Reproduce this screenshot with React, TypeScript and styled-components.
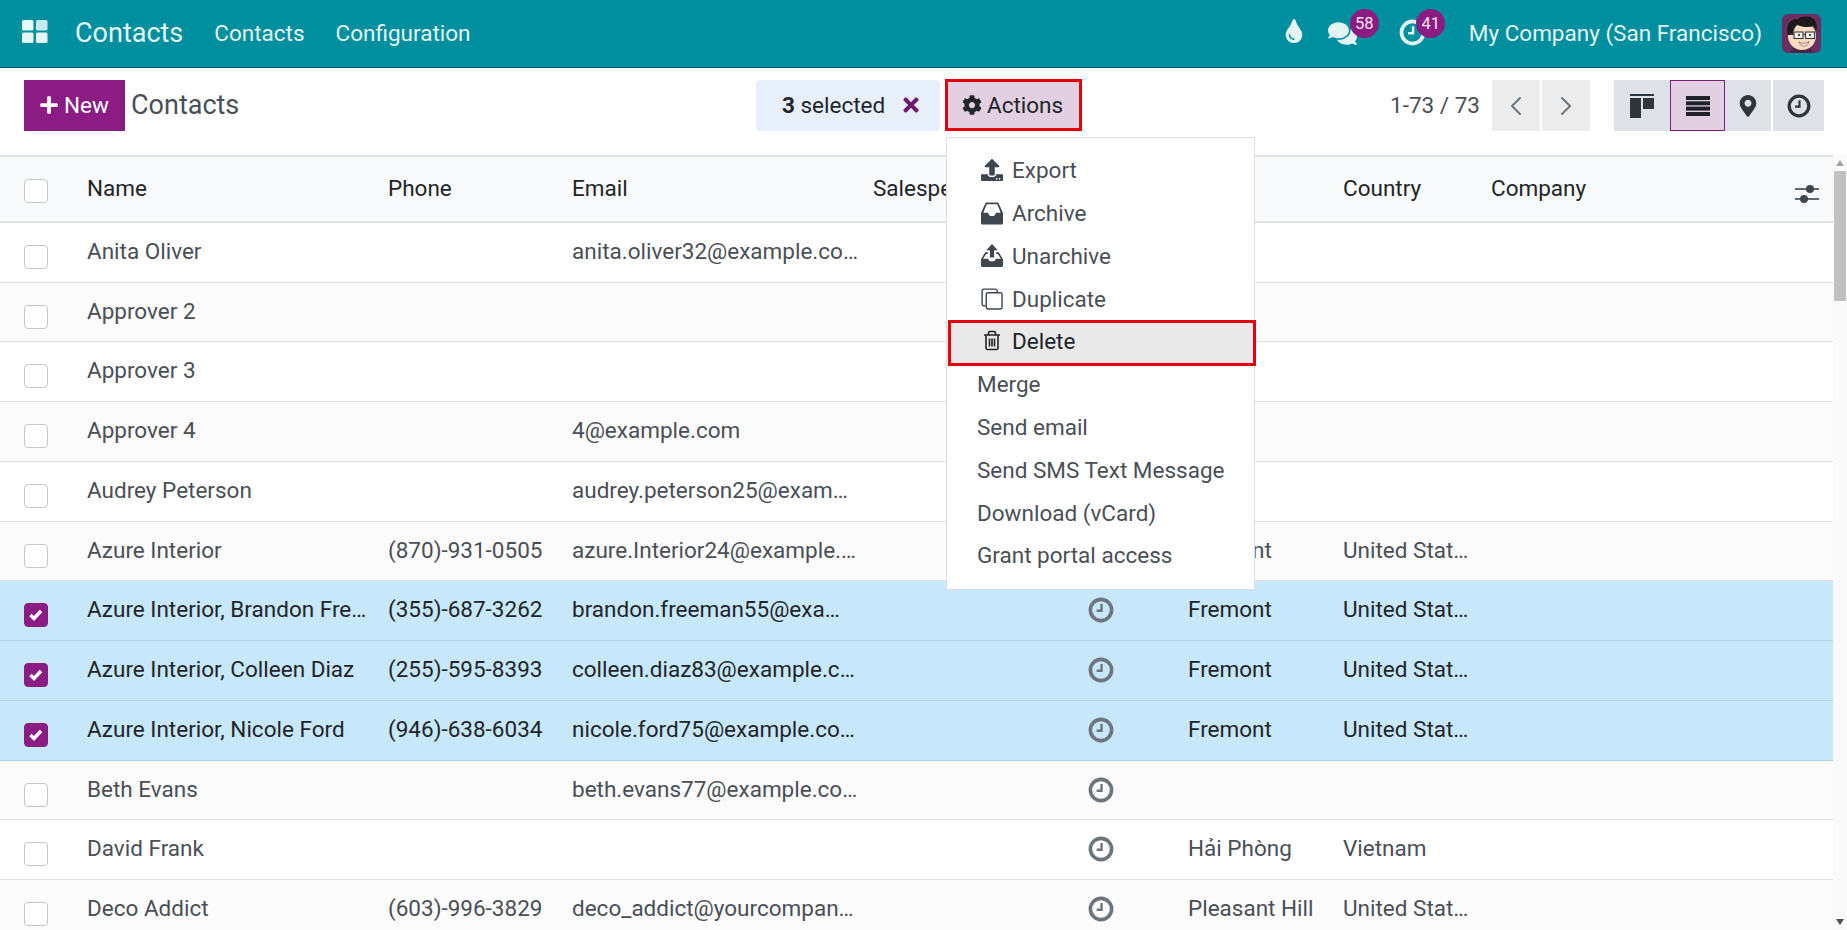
import styled, { createGlobalStyle } from 'styled-components'
import { FaComments, FaCog, FaPlus, FaTimes, FaTint, FaUpload, FaMapMarkerAlt } from 'react-icons/fa'
import { ChevronLeft, ChevronRight } from 'lucide-react'

const COLUMNS = '71px 301px 184px 301px 173px 142px 155px 148px 1fr 43px'

type Contact = {
    name: string
    phone?: string
    email?: string
    activity?: boolean
    city?: string
    country?: string
    selected?: boolean
    height: number
}

const contacts: Contact[] = [
    { name: 'Anita Oliver', email: 'anita.oliver32@example.co…', height: 60 },
    { name: 'Approver 2', height: 59 },
    { name: 'Approver 3', height: 60 },
    { name: 'Approver 4', email: '4@example.com', height: 60 },
    { name: 'Audrey Peterson', email: 'audrey.peterson25@exam…', height: 60 },
    { name: 'Azure Interior', phone: '(870)-931-0505', email: 'azure.Interior24@example.…', city: 'Fremont', country: 'United Stat…', height: 59 },
    { name: 'Azure Interior, Brandon Fre…', phone: '(355)-687-3262', email: 'brandon.freeman55@exa…', activity: true, city: 'Fremont', country: 'United Stat…', selected: true, height: 60 },
    { name: 'Azure Interior, Colleen Diaz', phone: '(255)-595-8393', email: 'colleen.diaz83@example.c…', activity: true, city: 'Fremont', country: 'United Stat…', selected: true, height: 60 },
    { name: 'Azure Interior, Nicole Ford', phone: '(946)-638-6034', email: 'nicole.ford75@example.co…', activity: true, city: 'Fremont', country: 'United Stat…', selected: true, height: 60 },
    { name: 'Beth Evans', email: 'beth.evans77@example.co…', activity: true, height: 59 },
    { name: 'David Frank', activity: true, city: 'Hải Phòng', country: 'Vietnam', height: 60 },
    { name: 'Deco Addict', phone: '(603)-996-3829', email: 'deco_addict@yourcompan…', activity: true, city: 'Pleasant Hill', country: 'United Stat…', height: 60 },
]

function ClockIcon({ size = 26 }: { size?: number }) {
    return (
        <svg width={size} height={size} viewBox="0 0 24 24" fill="none" stroke="currentColor">
            <circle cx="12" cy="12" r="9.800" strokeWidth="3.300" />
            <path d="M12.500 6.500v6.200H8" strokeWidth="2.200" />
        </svg>
    )
}

function ArchiveIcon() {
    return (
        <svg width="23" height="23" viewBox="1 1 21 21" fill="#3f4650">
            <path d="M5.500 1h12l4.500 10v9.500a1.500 1.500 0 0 1-1.500 1.500h-18A1.500 1.500 0 0 1 1 20.500V11L5.500 1zm1 1.600L3.200 10.800h4.300l2 3h4l2-3h4.300L16.500 2.600z" />
        </svg>
    )
}

function UnarchiveIcon() {
    return (
        <svg width="23" height="23" viewBox="1 0 21 22" fill="#3f4650">
            <path d="M11.500 0l5.500 6h-3.500v7h-4V6H6z" />
            <path d="M5 8h2.500v1.500H6L3 14h4.500l2 2.500h4l2-2.500H20l-3-4.500h-1.500V8H18l4 6.500v6a1.500 1.500 0 0 1-1.500 1.500h-18A1.500 1.500 0 0 1 1 20.500v-6z" />
        </svg>
    )
}

function DuplicateIcon() {
    return (
        <svg width="24" height="24" viewBox="0 0 23 23" fill="none" stroke="#3f4650" strokeWidth="1.500">
            <path d="M4.500 18.500H3a1.800 1.800 0 0 1-1.800-1.800V3A1.800 1.800 0 0 1 3 1.200h12.500A1.800 1.800 0 0 1 17 3v1.500" />
            <rect x="5.500" y="5" width="16.500" height="17" rx="1.800" />
        </svg>
    )
}

function TrashIcon() {
    return (
        <svg width="18" height="21" viewBox="0 0 18 20" fill="none" stroke="#212529" strokeWidth="1.600">
            <path d="M1 4.500h16M5.500 4.500V2.200C5.500 1.500 6 1 6.700 1h4.600c.7 0 1.200.5 1.200 1.200v2.300" />
            <path d="M3 4.500v13c0 .9.600 1.500 1.500 1.500h9c.9 0 1.500-.6 1.500-1.500v-13" />
            <path d="M6.500 8v8M9 8v8M11.500 8v8" />
        </svg>
    )
}

function SlidersIcon() {
    return (
        <svg width="24" height="20" viewBox="0 0 24 20" fill="#3f4650">
            <rect x="0" y="4.200" width="24" height="1.600" />
            <circle cx="15" cy="5" r="4" />
            <rect x="0" y="14.200" width="24" height="1.600" />
            <circle cx="9" cy="15" r="4" />
        </svg>
    )
}

function KanbanIcon() {
    return (
        <svg width="24" height="24" viewBox="0 0 24 24" fill="#2f353d">
            <rect x="0" y="0" width="24" height="2" />
            <rect x="0" y="4" width="11" height="20" />
            <rect x="13" y="4" width="11" height="11" />
        </svg>
    )
}

function ListIcon() {
    return (
        <svg width="24" height="20" viewBox="0 0 24 20" fill="#1f2329">
            <rect y="0" width="24" height="4" />
            <rect y="5.300" width="24" height="4" />
            <rect y="10.600" width="24" height="4" />
            <rect y="16" width="24" height="4" />
        </svg>
    )
}

function GridLogo() {
    return (
        <svg width="26" height="23" viewBox="0 0 26 23" fill="#e6f5f6">
            <rect x="0" y="0" width="11.500" height="10.500" rx="1.500" />
            <rect x="14" y="0" width="11.500" height="10.500" rx="1.500" fill="#c6e9ec" />
            <rect x="0" y="12.500" width="11.500" height="10.500" rx="1.500" />
            <rect x="14" y="12.500" width="11.500" height="10.500" rx="1.500" />
        </svg>
    )
}

function Avatar() {
    return (
        <svg width="39" height="39" viewBox="0 0 39 39">
            <rect width="39" height="39" rx="6" fill="#6a2f60" />
            <path d="M8 39c1-5 5-7 11-7s10 2 12 7z" fill="#4a2448" />
            <ellipse cx="20" cy="22" rx="14" ry="14" fill="#f7dcc2" />
            <path d="M6 21C3 11 9 4 16 5c3-3 11-3 14-1 4 2 6 7 4 14l-2-6c-6 2-12 1-17-1-2 2-4 5-4 10z" fill="#1d1a1e" />
            <g fill="none" stroke="#3a3a3a" strokeWidth="1.100">
                <rect x="12" y="18" width="9" height="6.500" fill="#eef2f0" />
                <rect x="23.500" y="18" width="9" height="6.500" fill="#eef2f0" />
                <path d="M21 20.500h2.500M12 20H7" />
            </g>
            <circle cx="17" cy="21" r="1.100" fill="#222" />
            <circle cx="28" cy="21" r="1.100" fill="#222" />
            <path d="M17 28c3 2 7 1.800 10-.500-1 3.500-3 4.500-5 4.500s-4-1.500-5-4z" fill="#fff" stroke="#7a3b2e" strokeWidth=".7" />
        </svg>
    )
}

const menuItems = [
    { label: 'Export', icon: <FaUpload size={22} color="#3f4650" /> },
    { label: 'Archive', icon: <ArchiveIcon /> },
    { label: 'Unarchive', icon: <UnarchiveIcon /> },
    { label: 'Duplicate', icon: <DuplicateIcon /> },
]

const plainItems = ['Merge', 'Send email', 'Send SMS Text Message', 'Download (vCard)', 'Grant portal access']

export default function App() {
    return (
        <>
            <GlobalStyle />
            <Page>
                <NavBar>
                    <LogoSlot>
                        <GridLogo />
                    </LogoSlot>
                    <Brand>Contacts</Brand>
                    <NavLink>Contacts</NavLink>
                    <NavLink>Configuration</NavLink>
                    <NavRight>
                        <NavIcon $right={14.5} $top={-4}>
                            <FaTint size={24} />
                        </NavIcon>
                        <NavIcon $right={36} $top={2}>
                            <FaComments size={29} />
                            <Badge $left={24}>58</Badge>
                        </NavIcon>
                        <NavIcon $right={39} $top={0}>
                            <ClockIcon size={27} />
                            <Badge $left={20.5}>41</Badge>
                        </NavIcon>
                        <CompanyName>My Company (San Francisco)</CompanyName>
                        <AvatarSlot>
                            <Avatar />
                        </AvatarSlot>
                    </NavRight>
                </NavBar>

                <ControlPanel>
                    <LeftGroup>
                        <NewButton>
                            <FaPlus size={20} />
                            New
                        </NewButton>
                        <Title>Contacts</Title>
                    </LeftGroup>
                    <SelectedChip>
                        <span>
                            <b>3</b> selected
                        </span>
                        <FaTimes size={22} color="#6f1a70" />
                    </SelectedChip>
                    <ActionsWrap>
                        <ActionsButton>
                            <FaCog size={20} />
                            Actions
                        </ActionsButton>
                        <Dropdown>
                            {menuItems.map((item) => (
                                <MenuItem key={item.label}>
                                    <MenuIcon>{item.icon}</MenuIcon>
                                    {item.label}
                                </MenuItem>
                            ))}
                            <DeleteItem>
                                <DeleteIcon>
                                    <TrashIcon />
                                </DeleteIcon>
                                Delete
                            </DeleteItem>
                            {plainItems.map((label) => (
                                <PlainItem key={label}>{label}</PlainItem>
                            ))}
                        </Dropdown>
                    </ActionsWrap>
                    <RightGroup>
                        <PagerText>1-73 / 73</PagerText>
                        <PagerButton>
                            <ChevronLeft size={32} strokeWidth={1.5} />
                        </PagerButton>
                        <PagerButton>
                            <ChevronRight size={32} strokeWidth={1.5} />
                        </PagerButton>
                        <ViewGroup>
                            <ViewButton $width={56}>
                                <KanbanIcon />
                            </ViewButton>
                            <ViewButton $width={55} $active>
                                <ListIcon />
                            </ViewButton>
                            <ViewButton $width={46}>
                                <FaMapMarkerAlt size={22} color="#2f353d" />
                            </ViewButton>
                            <ViewButton $width={51} $gap>
                                <ClockIcon size={24} />
                            </ViewButton>
                        </ViewGroup>
                    </RightGroup>
                </ControlPanel>

                <ListArea>
                    <Table>
                        <HeaderRow>
                            <CheckCell>
                                <CheckBox />
                            </CheckCell>
                            <HeaderCell>Name</HeaderCell>
                            <HeaderCell>Phone</HeaderCell>
                            <HeaderCell>Email</HeaderCell>
                            <HeaderCell>Salesperson</HeaderCell>
                            <HeaderCell>Activities</HeaderCell>
                            <HeaderCell>City</HeaderCell>
                            <HeaderCell>Country</HeaderCell>
                            <HeaderCell>Company</HeaderCell>
                            <SettingsCell>
                                <SlidersIcon />
                            </SettingsCell>
                        </HeaderRow>
                        {contacts.map((contact, index) => (
                            <Row key={contact.name} $selected={contact.selected} $odd={index % 2 === 1} $height={contact.height}>
                                <CheckCell>
                                    <CheckBox $checked={contact.selected}>
                                        {contact.selected && (
                                            <svg width="14" height="12" viewBox="0 0 14 12" fill="none" stroke="#fff" strokeWidth="3.400">
                                                <path d="M1.500 6l3.500 3.500 7-7.500" />
                                            </svg>
                                        )}
                                    </CheckBox>
                                </CheckCell>
                                <Cell>{contact.name}</Cell>
                                <Cell>{contact.phone}</Cell>
                                <Cell>{contact.email}</Cell>
                                <Cell />
                                <ActivityCell>{contact.activity && <ClockIcon />}</ActivityCell>
                                <Cell>{contact.city}</Cell>
                                <Cell>{contact.country}</Cell>
                            </Row>
                        ))}
                    </Table>
                    <ScrollBar>
                        <ScrollArrow>
                            <svg width="8" height="6" viewBox="0 0 8 6" fill="#a3a3a3">
                                <path d="M4 0l4 6H0z" />
                            </svg>
                        </ScrollArrow>
                        <ScrollThumb />
                        <ScrollArrow $bottom>
                            <svg width="8" height="6" viewBox="0 0 8 6" fill="#505050">
                                <path d="M0 0h8L4 6z" />
                            </svg>
                        </ScrollArrow>
                    </ScrollBar>
                </ListArea>
            </Page>
        </>
    )
}

const GlobalStyle = createGlobalStyle`
    html, body {
        margin: 0;
        height: 100%;
        overflow: hidden;
        background: #fff;
    }
    * {
        box-sizing: border-box;
    }
    body {
        font-family: Roboto, 'Noto Sans', sans-serif;
        font-size: 22.5px;
        color: #4a4f57;
    }
`
const Page = styled.div`
    display: flex;
    flex-direction: column;
    width: 1847px;
    height: 930px;
    overflow: hidden;
`
const NavBar = styled.header`
    display: flex;
    align-items: center;
    flex: 0 0 68px;
    padding-bottom: 2px;
    background: #008f9e;
    border-bottom: 1px solid #075a66;
    color: #e4f4f5;
`
const LogoSlot = styled.div`
    display: flex;
    margin: -2px 0 0 22px;
`
const Brand = styled.div`
    margin: 1px 0 0 27px;
    font-size: 27px;
`
const NavLink = styled.div`
    margin-left: 31px;
`
const NavRight = styled.div`
    display: flex;
    align-items: center;
    margin-left: auto;
`
const NavIcon = styled.div<{ $right: number; $top: number }>`
    position: relative;
    display: flex;
    justify-content: center;
    width: 34px;
    margin-top: ${(p) => p.$top}px;
    margin-right: ${(p) => p.$right}px;
    color: #e4f4f5;
`
const Badge = styled.span<{ $left: number }>`
    position: absolute;
    top: -10px;
    left: ${(p) => p.$left}px;
    display: flex;
    align-items: center;
    justify-content: center;
    width: 29px;
    height: 29px;
    border-radius: 50%;
    background: #8a1c83;
    color: #f2e6f1;
    font-size: 16.5px;
`
const CompanyName = styled.div``
const AvatarSlot = styled.div`
    display: flex;
    margin: 2px 26px 0 20px;
`
const ControlPanel = styled.div`
    display: flex;
    align-items: flex-start;
    flex: 0 0 87px;
    padding: 12px 23px 0 24px;
`
const LeftGroup = styled.div`
    display: flex;
    align-items: center;
    width: 732px;
`
const NewButton = styled.button`
    display: flex;
    align-items: center;
    gap: 5px;
    width: 101px;
    height: 51px;
    padding: 0 0 2px 15px;
    border: none;
    background: #8a1c83;
    color: #fff;
    font: inherit;
`
const Title = styled.div`
    margin: -2px 0 0 6px;
    font-size: 27px;
`
const SelectedChip = styled.div`
    display: flex;
    align-items: center;
    justify-content: space-between;
    width: 184px;
    height: 51px;
    padding: 0 18px 2px 26px;
    border-radius: 4px;
    background: #e7effb;
    color: #212529;
`
const ActionsWrap = styled.div`
    position: relative;
    margin: -1px 0 0 5px;
`
const ActionsButton = styled.button`
    display: flex;
    align-items: center;
    gap: 5px;
    width: 137px;
    height: 52px;
    padding: 0 0 0 14px;
    border: 3px solid #e6000f;
    background: #e2d0e2;
    color: #212529;
    font: inherit;
`
const Dropdown = styled.div`
    position: absolute;
    top: 58px;
    left: 1px;
    z-index: 5;
    width: 309px;
    height: 453px;
    padding-top: 11px;
    border: 1px solid #dcdfe2;
    background: #fff;
    color: #4a4f57;
`
const MenuItem = styled.div`
    display: flex;
    align-items: center;
    height: 42.8px;
    padding-left: 34px;
`
const MenuIcon = styled.span`
    display: flex;
    justify-content: center;
    width: 22px;
    margin-right: 9px;
`
const DeleteIcon = styled(MenuIcon)`
    margin-top: 2px;
`
const DeleteItem = styled.div`
    position: relative;
    z-index: 1;
    display: flex;
    align-items: flex-start;
    height: 46px;
    margin: 0 -2px -3.4px 1px;
    padding: 5px 0 0 30px;
    border: 3px solid #e6000f;
    background: #e9e9e9;
    color: #212529;
    line-height: 26px;
`
const PlainItem = styled.div`
    display: flex;
    align-items: center;
    height: 42.8px;
    padding-left: 30px;
`
const RightGroup = styled.div`
    display: flex;
    align-items: center;
    margin-left: auto;
`
const PagerText = styled.div`
    margin: -2px 12px 0 0;
`
const PagerButton = styled.button`
    display: flex;
    align-items: center;
    justify-content: center;
    width: 48px;
    height: 51px;
    margin-right: 2px;
    padding: 0;
    border: none;
    background: #ececec;
    color: #6c757d;
`
const ViewGroup = styled.div`
    display: flex;
    margin-left: 22px;
`
const ViewButton = styled.button<{ $width: number; $active?: boolean; $gap?: boolean }>`
    display: flex;
    align-items: center;
    justify-content: center;
    width: ${(p) => p.$width}px;
    height: 51px;
    margin-left: ${(p) => (p.$gap ? '2px' : '0')};
    padding: 0;
    border: ${(p) => (p.$active ? '1px solid #7b1f77' : 'none')};
    background: ${(p) => (p.$active ? '#e2d0e2' : '#dee2e6')};
    color: #2f353d;
`
const ListArea = styled.div`
    display: flex;
    flex: 1;
    min-height: 0;
`
const Table = styled.div`
    flex: 1;
    min-width: 0;
    overflow: hidden;
`
const CheckCell = styled.div`
    padding: 22px 0 0 24px;
`
const CheckBox = styled.div<{ $checked?: boolean }>`
    display: flex;
    align-items: center;
    justify-content: center;
    width: 24px;
    height: 24px;
    border: 1px solid ${(p) => (p.$checked ? '#8a1c83' : '#c3c6ca')};
    border-radius: 4px;
    background: ${(p) => (p.$checked ? '#8a1c83' : '#fff')};
`
const Cell = styled.div`
    padding: 13px 0 0 16px;
    line-height: 30px;
    white-space: nowrap;
`
const HeaderCell = styled(Cell)`
    padding-top: 16px;
    overflow: hidden;
`
const ActivityCell = styled.div`
    display: flex;
    justify-content: center;
    padding-top: 16px;
    color: #6c757d;
`
const SettingsCell = styled.div`
    padding: 26px 0 0 5px;
`
const HeaderRow = styled.div`
    display: grid;
    grid-template-columns: ${COLUMNS};
    height: 68px;
    border-top: 2px solid #dee2e6;
    border-bottom: 2px solid #dee2e6;
    background: #f8f9fa;
    color: #212529;
`
const Row = styled.div<{ $selected?: boolean; $odd?: boolean; $height: number }>`
    display: grid;
    grid-template-columns: ${COLUMNS};
    height: ${(p) => p.$height}px;
    border-bottom: 1px solid ${(p) => (p.$selected ? '#b1d3e6' : '#dee2e6')};
    background: ${(p) => (p.$selected ? '#c7e7fa' : p.$odd ? '#fbfbfb' : '#fff')};
    color: ${(p) => (p.$selected ? '#212529' : '#4a4f57')};
`
const ScrollBar = styled.div`
    display: flex;
    flex-direction: column;
    flex: 0 0 14px;
    background: #fafafa;
`
const ScrollArrow = styled.div<{ $bottom?: boolean }>`
    display: flex;
    align-items: center;
    justify-content: center;
    height: 16px;
    margin-top: ${(p) => (p.$bottom ? 'auto' : '0')};
`
const ScrollThumb = styled.div`
    height: 130px;
    margin: 0 1px;
    background: #c1c1c1;
`
